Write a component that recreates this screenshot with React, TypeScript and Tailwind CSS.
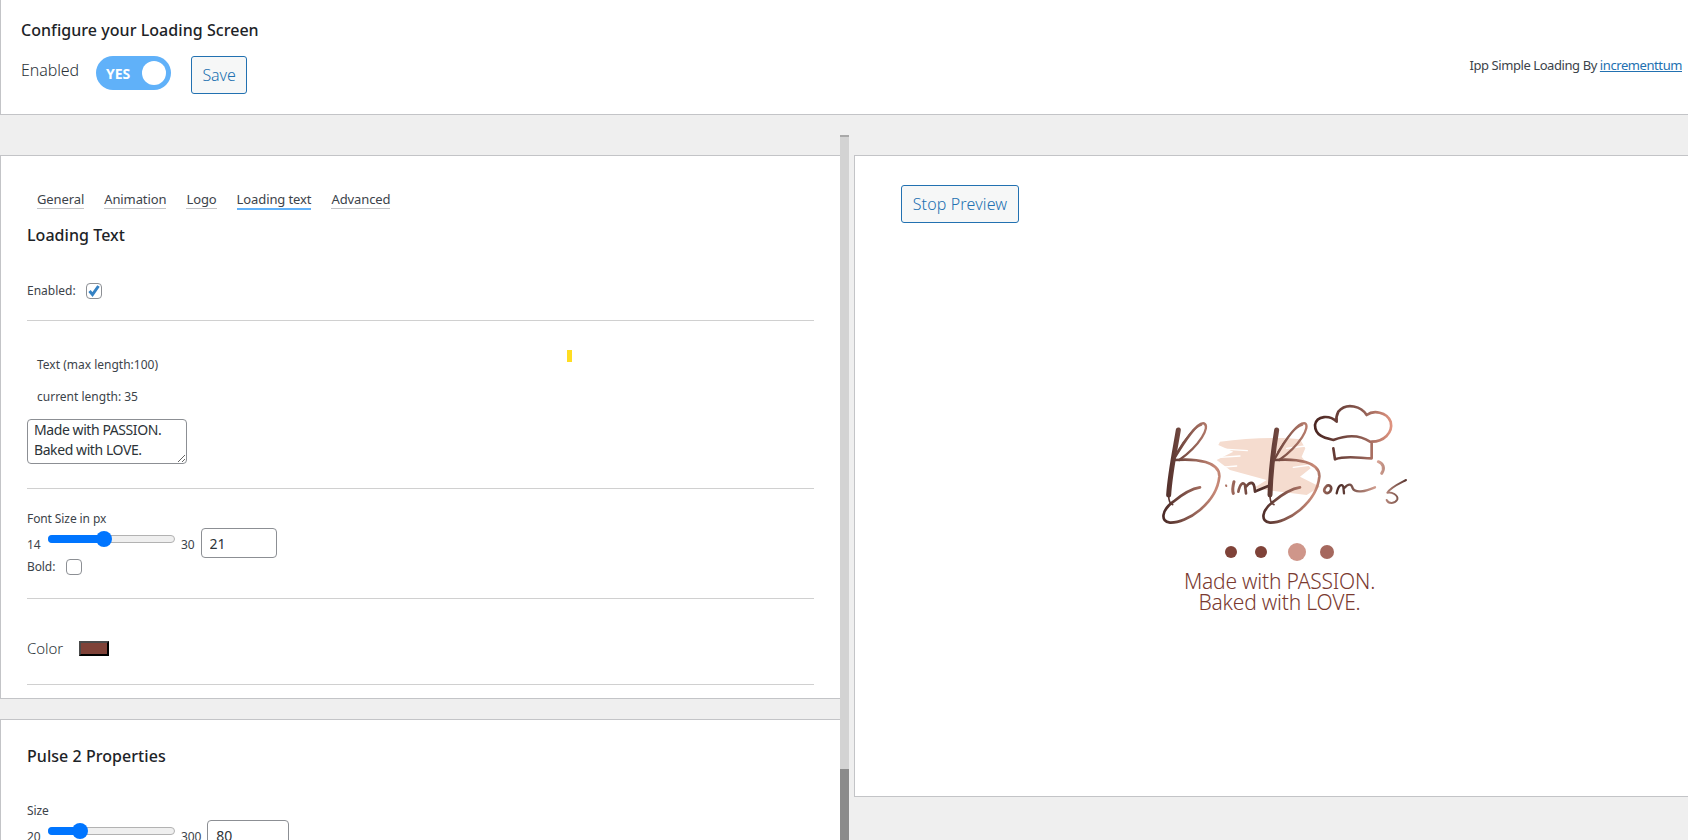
const tabs = ["General", "Animation", "Logo", "Loading text", "Advanced"];

const Slider = ({ min, max, fill, inputWidth, value }: { min: string; max: string; fill: string; inputWidth: string; value: string }) => {
    return (
        <div className="flex items-center h-[30px] text-[12px]">
            <span className="w-[21px] mt-[3px]">{min}</span>
            <div className="flex items-center w-[127px] h-[8px] bg-[#efefef] border border-[#b2b2b2] rounded-full -mt-[8px]">
                <div className={`${fill} h-[8px] bg-[#0075ff] rounded-l-full -ml-px`}></div>
                <div className="w-[16px] h-[16px] bg-[#0075ff] rounded-full shrink-0 -ml-[8px]"></div>
            </div>
            <span className="ml-[6px] mt-[3px]">{max}</span>
            <input defaultValue={value} className={`${inputWidth} h-[30px] ml-[6px] px-[8px] text-[14px] text-[#2c3338] bg-white border border-[#8c8f94] rounded-[4px]`} />
        </div>
    )
}

const Check = ({ checked }: { checked?: boolean }) => {
    return (
        <div className="w-[16px] h-[16px] flex items-center justify-center bg-white border border-[#8c8f94] rounded-[4px]">
            {checked && (
                <svg width="14" height="14" viewBox="0 0 14 14">
                    <path d="M2.5 7 L5.5 10.5 L11.5 2" fill="none" stroke="#3582c4" strokeWidth="3" />
                </svg>
            )}
        </div>
    )
}

const Logo = () => {
    return (
        <svg width="250" height="125" viewBox="120 69 750 375" fill="none" strokeLinecap="round" strokeLinejoin="round">
            <defs>
                <linearGradient id="letters" gradientUnits="userSpaceOnUse" x1="130" y1="0" x2="860" y2="0">
                    <stop offset="0" stopColor="#4a2a26" />
                    <stop offset="0.22" stopColor="#c98a78" />
                    <stop offset="0.4" stopColor="#4a2a26" />
                    <stop offset="0.62" stopColor="#c98a78" />
                    <stop offset="0.72" stopColor="#4a2a26" />
                    <stop offset="0.88" stopColor="#d9a596" />
                    <stop offset="1" stopColor="#5a3630" />
                </linearGradient>
                <linearGradient id="hat" gradientUnits="userSpaceOnUse" x1="585" y1="0" x2="815" y2="0">
                    <stop offset="0" stopColor="#4a2521" />
                    <stop offset="0.6" stopColor="#8a5a50" />
                    <stop offset="1" stopColor="#e09480" />
                </linearGradient>
            </defs>
            <path d="M300 185 C380 175 480 170 540 178 L556 205 L545 230 L572 265 L540 290 L600 320 L560 345 L400 325 L440 300 L330 270 L290 240 L340 215 L295 195 Z" fill="#f5dccf" />
            <g stroke="#ffffff" strokeWidth="4">
                <path d="M290 206 L382 212 M300 232 L360 228 M500 205 L556 198 M520 262 L572 255 M300 262 L350 258" />
            </g>
            <g stroke="url(#letters)">
                <path d="M175 150 C165 210 150 280 146 345" strokeWidth="15" />
                <path d="M146 345 C146 360 150 372 158 374" strokeWidth="5" />
                <path d="M160 240 C190 190 230 125 252 130 C272 140 240 195 178 240" strokeWidth="7" />
                <path d="M172 215 C195 175 225 140 245 135" strokeWidth="4" />
                <path d="M165 240 C230 235 300 245 298 290 C290 370 200 430 150 428 C120 425 125 390 160 365 C190 340 220 325 240 322" strokeWidth="8" />
                <path d="M318 316 L319 318" strokeWidth="6" />
                <path d="M342 305 C338 320 338 335 340 340" strokeWidth="9" />
                <path d="M355 335 C360 310 370 305 375 315 L378 340 M378 320 C390 305 400 305 403 320 L405 335 C415 330 430 325 445 318" strokeWidth="8" />
                <path d="M470 150 C460 210 452 280 450 345" strokeWidth="15" />
                <path d="M450 345 C450 360 454 372 462 374" strokeWidth="5" />
                <path d="M462 240 C490 190 530 125 555 130 C572 140 540 195 478 240" strokeWidth="7" />
                <path d="M474 215 C497 175 527 140 548 135" strokeWidth="4" />
                <path d="M465 240 C530 235 600 245 598 290 C590 370 500 430 450 428 C420 425 425 390 460 365 C490 340 520 325 540 322" strokeWidth="8" />
                <path d="M618 320 C605 335 620 345 630 335 C640 320 625 310 618 320" strokeWidth="8" />
                <path d="M650 340 C655 315 665 310 670 320 L672 340 M672 325 C685 310 695 310 698 325 C705 340 735 335 765 322" strokeWidth="7" />
                <path d="M775 245 C790 250 795 265 785 280" strokeWidth="9" />
                <path d="M858 300 C835 312 812 322 802 338 C815 335 835 345 832 358 C825 372 805 372 800 360" strokeWidth="6" />
            </g>
            <path d="M640 205 L645 238 C680 225 720 235 755 235 L755 185 C790 185 820 160 812 125 C800 95 760 90 740 105 C725 80 680 65 655 95 C650 105 648 115 650 125 C630 105 590 105 585 135 C585 170 620 175 640 180 C680 165 720 165 750 185" stroke="url(#hat)" strokeWidth="8" />
        </svg>
    )
}

const App = () => {
    return (
        <div className="h-[840px] overflow-hidden bg-[#efefef] text-[#3c434a] font-['Noto_Sans','Open_Sans',sans-serif] tracking-[-0.1px]">
            {/* header */}
            <div className="relative h-[115px] bg-white border-l border-b border-[#c3c4c7] pl-[20px] pt-[18px]">
                <p className="text-[16px] font-medium tracking-[0.05px] text-[#1d2327] leading-[24px]">Configure your Loading Screen</p>
                <div className="flex items-start mt-[14px]">
                    <span className="text-[16px] font-light text-[#2c3338] leading-[24px] mt-[2px] w-[75px]">Enabled</span>
                    <div className="flex items-center justify-between w-[75px] h-[34px] pl-[10px] pr-[5px] bg-[#60b1f9] rounded-full">
                        <span className="text-[14px] font-bold text-white">YES</span>
                        <div className="w-[24px] h-[24px] bg-white rounded-full"></div>
                    </div>
                    <button className="ml-[20px] w-[56px] h-[38px] text-[16px] font-light text-[#2271b1] bg-[#f6f7f7] border border-[#2271b1] rounded-[3px]">Save</button>
                </div>
                <p className="absolute right-[6px] top-[55px] text-[13px] leading-[20px] tracking-[-0.42px]">
                    Ipp Simple Loading By <a href="#" className="text-[#2271b1] underline">incrementtum</a>
                </p>
            </div>

            <div className="flex">
                {/* settings column */}
                <div className="w-[840px] shrink-0 mt-[40px]">
                    <div className="relative h-[544px] bg-white border-l border-y border-[#c3c4c7] pl-[26px] pt-[33px]">
                        <div className="flex gap-[20px] pl-[10px] text-[13px] leading-[20px]">
                            {tabs.map((tab) => (
                                <span key={tab} className={tab === "Loading text" ? "border-b-2 border-[#60b1f9] h-[21px]" : "border-b border-[#c3c4c7] h-[20px]"}>{tab}</span>
                            ))}
                        </div>
                        <p className="mt-[13px] text-[16px] font-medium tracking-[0.05px] text-[#1d2327] leading-[24px]">Loading Text</p>

                        <div className="flex items-center gap-[10px] mt-[34px] text-[12px] tracking-[0px] h-[20px]">
                            <span>Enabled:</span>
                            <Check checked />
                        </div>
                        <div className="w-[787px] h-px bg-[#d0d0d0] mt-[19px]"></div>

                        <p className="ml-[10px] mt-[34px] text-[12px] tracking-[0px] leading-[20px]">Text (max length:100)</p>
                        <p className="ml-[10px] mt-[12px] text-[12px] tracking-[0px] leading-[20px]">current length: 35</p>
                        <textarea
                            defaultValue={"Made with PASSION.\nBaked with LOVE."}
                            className="block w-[160px] h-[45px] mt-[12px] px-[6px] py-0 text-[14px] tracking-[-0.42px] leading-[20px] text-[#2c3338] bg-white border border-[#8c8f94] rounded-[4px] overflow-hidden"
                        />
                        <div className="w-[787px] h-px bg-[#d0d0d0] mt-[24px]"></div>

                        <p className="mt-[21px] text-[12px] leading-[18px]">Font Size in px</p>
                        <Slider min="14" max="30" fill="w-[56px]" inputWidth="w-[76px]" value="21" />
                        <div className="flex items-center gap-[11px] mt-[1px] text-[12px] h-[16px]">
                            <span>Bold:</span>
                            <Check />
                        </div>
                        <div className="w-[787px] h-px bg-[#d0d0d0] mt-[23px]"></div>

                        <div className="flex items-center gap-[16px] mt-[35px] h-[28px]">
                            <span className="text-[15px] font-light text-[#2c3338]">Color</span>
                            <div className="w-[30px] h-[15px] bg-[#7f4238] border-l-[2px] border-t-[2px] border-[#4a4a4a] border-r-[2px] border-b-[2px] border-r-black border-b-black"></div>
                        </div>
                        <div className="w-[787px] h-px bg-[#d0d0d0] mt-[22px]"></div>

                        {/* stray marker */}
                        <div className="absolute left-[566px] top-[194px] w-[5px] h-[12px] bg-[#ffdd22]"></div>
                    </div>

                    <div className="h-[200px] mt-[20px] bg-white border-l border-t border-[#c3c4c7] pl-[26px] pt-[24px]">
                        <p className="text-[16px] font-medium tracking-[0.05px] text-[#1d2327] leading-[24px]">Pulse 2 Properties</p>
                        <p className="mt-[34px] text-[12px] leading-[18px]">Size</p>
                        <Slider min="20" max="300" fill="w-[32px]" inputWidth="w-[82px]" value="80" />
                    </div>
                </div>

                {/* scrollbar */}
                <div className="flex flex-col w-[9px] shrink-0 mt-[20px]">
                    <div className="h-[634px] bg-[#d3d3d3] border-t-2 border-[#a8a8a8]"></div>
                    <div className="flex-1 bg-[#8b8b8b]"></div>
                </div>

                {/* preview column */}
                <div className="flex-1 ml-[5px] mt-[40px]">
                    <div className="h-[642px] bg-white border-l border-y border-[#c3c4c7] pl-[46px] pt-[29px]">
                        <button className="w-[118px] h-[38px] text-[16px] font-light tracking-[0.15px] text-[#2271b1] bg-[#f6f7f7] border border-[#2271b1] rounded-[3px]">Stop Preview</button>
                        <div className="flex flex-col items-center w-[757px] mt-[180px] ml-[-46px] pl-[102px]">
                            <Logo />
                            <div className="flex items-center -ml-[10px] mt-[15px] h-[18px]">
                                <div className="w-[12px] h-[12px] rounded-full bg-[#7f4238]"></div>
                                <div className="w-[12px] h-[12px] rounded-full bg-[#7f4238] ml-[18px]"></div>
                                <div className="w-[18px] h-[18px] rounded-full bg-[#cf968a] ml-[21px]"></div>
                                <div className="w-[14px] h-[14px] rounded-full bg-[#a5685e] ml-[14px]"></div>
                            </div>
                            <p className="-ml-[10px] mt-[10px] text-center text-[21px] font-light tracking-[-0.2px] leading-[21px] text-[#7a3a30]">Made with PASSION.<br />Baked with LOVE.</p>
                        </div>
                    </div>
                </div>
            </div>
        </div>
    )
}

export default App;
